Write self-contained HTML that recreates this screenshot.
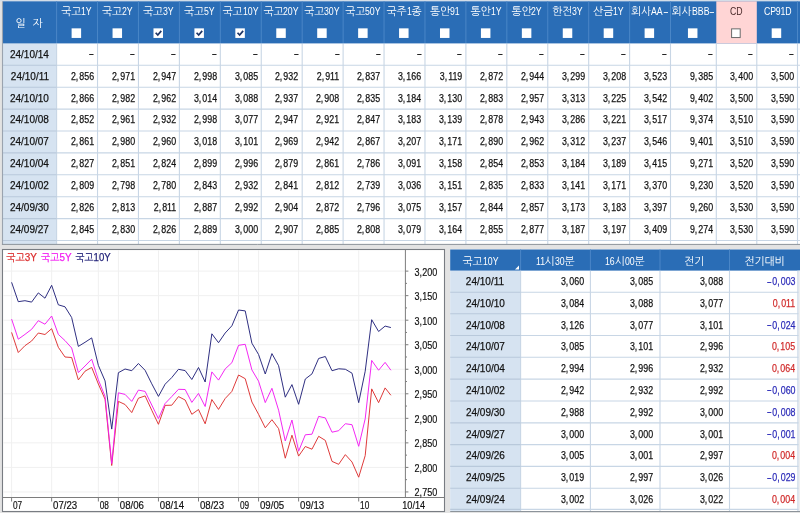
<!DOCTYPE html><html lang="ko"><head><meta charset="utf-8"><title>금리 시세</title><style>

html,body{margin:0;padding:0}
body{width:800px;height:513px;overflow:hidden;background:#e3e3e3;font-family:"Liberation Sans","NanumGothic","Noto Sans CJK KR",sans-serif;font-size:10px;color:#111;position:relative}
div,span{box-sizing:border-box}
.abs{position:absolute}
svg{display:block}
#top,#t2{position:absolute;left:0;top:0;width:800px;height:513px;overflow:hidden;will-change:transform}
#top{height:246px}
.hd{position:absolute;color:#fff;text-align:center;white-space:nowrap}
.hd.cd{color:#4a2a2a}
.hd .t{position:absolute;left:-1px;right:0;top:4px;height:12px;line-height:12px}
.k{font-size:10.8px;letter-spacing:-0.1px}
.l{display:inline-block;font-size:11.5px;transform:scaleX(.76);transform-origin:0 50%;letter-spacing:0}
.hy{display:inline-block;font-size:11.5px;transform:scaleX(1.5);transform-origin:0 50%;margin-right:1.5px;position:relative;top:-0.5px}
.dc{position:absolute;text-align:center;white-space:nowrap}
.c{position:absolute;text-align:right;white-space:nowrap}
.n,.d,.m{-webkit-text-stroke:0.25px currentColor}
.cm{margin-right:1.3px}
.n{display:inline-block;font-size:11.5px;transform:scaleX(.77);transform-origin:100% 50%}
.m{display:inline-block;font-size:11.5px;transform:scaleX(1.35);transform-origin:100% 50%;position:relative;top:-0.5px}
.d{display:inline-block;font-size:11.5px;transform:scaleX(.87);transform-origin:50% 50%}
.neg{color:#2b2bb8}.pos{color:#d02a2a}
.mi{display:inline-block;transform:scaleX(1.7);transform-origin:100% 50%;margin-left:3px;margin-right:0.6px;position:relative;top:-0.5px}

</style></head><body>
<div id="top">
<svg class="abs" style="left:0;top:0" width="800" height="246" viewBox="0 0 800 246">
<rect x="0" y="0" width="800" height="1.3" fill="#d3dde8"/>
<rect x="2.8" y="1.3" width="800" height="243.1" fill="#fff"/>
<rect x="2.8" y="43.4" width="53.8" height="201" fill="#d6e3f1"/>
<rect x="2.8" y="1.3" width="800" height="42.1" fill="#2a6db6"/>
<rect x="716.3" y="1.3" width="40.5" height="42.1" fill="#ffd5d5"/>
<path d="M56.6 1.3V43.4M97.53 1.3V43.4M138.46 1.3V43.4M179.39 1.3V43.4M220.32 1.3V43.4M261.25 1.3V43.4M302.18 1.3V43.4M343.11 1.3V43.4M384.04 1.3V43.4M424.97 1.3V43.4M465.9 1.3V43.4M506.83 1.3V43.4M547.76 1.3V43.4M588.69 1.3V43.4M629.62 1.3V43.4M670.5 1.3V43.4M797.5 1.3V43.4" stroke="#4a86c7" stroke-width="1" fill="none"/>
<path d="M56.6 43.4V244.4M97.53 43.4V244.4M138.46 43.4V244.4M179.39 43.4V244.4M220.32 43.4V244.4M261.25 43.4V244.4M302.18 43.4V244.4M343.11 43.4V244.4M384.04 43.4V244.4M424.97 43.4V244.4M465.9 43.4V244.4M506.83 43.4V244.4M547.76 43.4V244.4M588.69 43.4V244.4M629.62 43.4V244.4M670.5 43.4V244.4M716.3 43.4V244.4M756.8 43.4V244.4M797.5 43.4V244.4M56.6 65.3H800M56.6 87.2H800M56.6 109.1H800M56.6 131H800M56.6 152.9H800M56.6 174.8H800M56.6 196.7H800M56.6 218.6H800M56.6 240.5H800" stroke="#c8d6e5" stroke-width="1.1" fill="none"/>
<path d="M2.8 65.3H56.6M2.8 87.2H56.6M2.8 109.1H56.6M2.8 131H56.6M2.8 152.9H56.6M2.8 174.8H56.6M2.8 196.7H56.6M2.8 218.6H56.6M2.8 240.5H56.6" stroke="#b9c9db" stroke-width="1.1" fill="none"/>
<rect x="71.61" y="28.35" width="9.5" height="9.6" fill="#fff"/>
<rect x="112.55" y="28.35" width="9.5" height="9.6" fill="#fff"/>
<rect x="153.48" y="28.35" width="9.5" height="9.6" fill="#fff"/>
<path d="M155.68 32.75l2.1 2.3l3.5 -4.2" fill="none" stroke="#1e3566" stroke-width="1.7"/>
<rect x="194.41" y="28.35" width="9.5" height="9.6" fill="#fff"/>
<path d="M196.6 32.75l2.1 2.3l3.5 -4.2" fill="none" stroke="#1e3566" stroke-width="1.7"/>
<rect x="235.34" y="28.35" width="9.5" height="9.6" fill="#fff"/>
<path d="M237.53 32.75l2.1 2.3l3.5 -4.2" fill="none" stroke="#1e3566" stroke-width="1.7"/>
<rect x="276.27" y="28.35" width="9.5" height="9.6" fill="#fff"/>
<rect x="317.19" y="28.35" width="9.5" height="9.6" fill="#fff"/>
<rect x="358.13" y="28.35" width="9.5" height="9.6" fill="#fff"/>
<rect x="399.06" y="28.35" width="9.5" height="9.6" fill="#fff"/>
<rect x="439.99" y="28.35" width="9.5" height="9.6" fill="#fff"/>
<rect x="480.92" y="28.35" width="9.5" height="9.6" fill="#fff"/>
<rect x="521.85" y="28.35" width="9.5" height="9.6" fill="#fff"/>
<rect x="562.77" y="28.35" width="9.5" height="9.6" fill="#fff"/>
<rect x="603.7" y="28.35" width="9.5" height="9.6" fill="#fff"/>
<rect x="644.61" y="28.35" width="9.5" height="9.6" fill="#fff"/>
<rect x="687.95" y="28.35" width="9.5" height="9.6" fill="#fff"/>
<rect x="731.6" y="28.85" width="8.6" height="8.7" fill="#fff" stroke="#6b6b6b" stroke-width="1"/>
<rect x="771.7" y="28.35" width="9.5" height="9.6" fill="#fff"/>
<path d="M2.5 1.3V244.4" stroke="#9aa3af" stroke-width="1.1" fill="none"/>
<path d="M1.9 244.4H800" stroke="#8c939a" stroke-width="1" fill="none"/>
</svg>
<div class="hd" style="left:2.8px;top:1.3px;width:53.8px;height:42.1px"><div class="t" style="top:15.5px"><span class="k" style="letter-spacing:7px;margin-left:7px">일자</span></div></div>
<div class="hd" style="left:56.6px;top:1.3px;width:40.93px;height:42.1px"><div class="t"><span class="k">국고</span><span class="l" style="margin-right:-3.38px">1Y</span></div></div>
<div class="hd" style="left:97.53px;top:1.3px;width:40.93px;height:42.1px"><div class="t"><span class="k">국고</span><span class="l" style="margin-right:-3.38px">2Y</span></div></div>
<div class="hd" style="left:138.46px;top:1.3px;width:40.93px;height:42.1px"><div class="t"><span class="k">국고</span><span class="l" style="margin-right:-3.38px">3Y</span></div></div>
<div class="hd" style="left:179.39px;top:1.3px;width:40.93px;height:42.1px"><div class="t"><span class="k">국고</span><span class="l" style="margin-right:-3.38px">5Y</span></div></div>
<div class="hd" style="left:220.32px;top:1.3px;width:40.93px;height:42.1px"><div class="t"><span class="k">국고</span><span class="l" style="margin-right:-4.91px">10Y</span></div></div>
<div class="hd" style="left:261.25px;top:1.3px;width:40.93px;height:42.1px"><div class="t"><span class="k">국고</span><span class="l" style="margin-right:-4.91px">20Y</span></div></div>
<div class="hd" style="left:302.18px;top:1.3px;width:40.93px;height:42.1px"><div class="t"><span class="k">국고</span><span class="l" style="margin-right:-4.91px">30Y</span></div></div>
<div class="hd" style="left:343.11px;top:1.3px;width:40.93px;height:42.1px"><div class="t"><span class="k">국고</span><span class="l" style="margin-right:-4.91px">50Y</span></div></div>
<div class="hd" style="left:384.04px;top:1.3px;width:40.93px;height:42.1px"><div class="t"><span class="k">국주</span><span class="l" style="margin-right:-1.53px">1</span><span class="k">종</span></div></div>
<div class="hd" style="left:424.97px;top:1.3px;width:40.93px;height:42.1px"><div class="t"><span class="k">통안</span><span class="l" style="margin-right:-3.07px">91</span></div></div>
<div class="hd" style="left:465.9px;top:1.3px;width:40.93px;height:42.1px"><div class="t"><span class="k">통안</span><span class="l" style="margin-right:-3.38px">1Y</span></div></div>
<div class="hd" style="left:506.83px;top:1.3px;width:40.93px;height:42.1px"><div class="t"><span class="k">통안</span><span class="l" style="margin-right:-3.38px">2Y</span></div></div>
<div class="hd" style="left:547.76px;top:1.3px;width:40.93px;height:42.1px"><div class="t"><span class="k">한전</span><span class="l" style="margin-right:-3.38px">3Y</span></div></div>
<div class="hd" style="left:588.69px;top:1.3px;width:40.93px;height:42.1px"><div class="t"><span class="k">산금</span><span class="l" style="margin-right:-3.38px">1Y</span></div></div>
<div class="hd" style="left:629.62px;top:1.3px;width:40.88px;height:42.1px"><div class="t"><span class="k">회사</span><span class="l" style="margin-right:-3.68px">AA</span><span class="hy">-</span></div></div>
<div class="hd" style="left:670.5px;top:1.3px;width:45.8px;height:42.1px"><div class="t"><span class="k">회사</span><span class="l" style="margin-right:-5.52px">BBB</span><span class="hy">-</span></div></div>
<div class="hd cd" style="left:716.3px;top:1.3px;width:40.5px;height:42.1px"><div class="t"><span class="l" style="margin-right:-3.99px">CD</span></div></div>
<div class="hd" style="left:756.8px;top:1.3px;width:40.7px;height:42.1px"><div class="t"><span class="l" style="margin-right:-8.9px;letter-spacing:-0.2px;margin-left:1px">CP91D</span></div></div>
<div class="dc" style="left:2.8px;width:53.8px;top:43.7px;height:21.9px;line-height:21.9px"><span class="d">24/10/14</span></div>
<div class="c" style="left:56.6px;width:40.93px;padding-right:3.6px;top:43.7px;height:21.9px;line-height:21.9px"><span class="m">-</span></div>
<div class="c" style="left:97.53px;width:40.93px;padding-right:3.6px;top:43.7px;height:21.9px;line-height:21.9px"><span class="m">-</span></div>
<div class="c" style="left:138.46px;width:40.93px;padding-right:3.6px;top:43.7px;height:21.9px;line-height:21.9px"><span class="m">-</span></div>
<div class="c" style="left:179.39px;width:40.93px;padding-right:3.6px;top:43.7px;height:21.9px;line-height:21.9px"><span class="m">-</span></div>
<div class="c" style="left:220.32px;width:40.93px;padding-right:3.6px;top:43.7px;height:21.9px;line-height:21.9px"><span class="m">-</span></div>
<div class="c" style="left:261.25px;width:40.93px;padding-right:3.6px;top:43.7px;height:21.9px;line-height:21.9px"><span class="m">-</span></div>
<div class="c" style="left:302.18px;width:40.93px;padding-right:3.6px;top:43.7px;height:21.9px;line-height:21.9px"><span class="m">-</span></div>
<div class="c" style="left:343.11px;width:40.93px;padding-right:3.6px;top:43.7px;height:21.9px;line-height:21.9px"><span class="m">-</span></div>
<div class="c" style="left:384.04px;width:40.93px;padding-right:3.6px;top:43.7px;height:21.9px;line-height:21.9px"><span class="m">-</span></div>
<div class="c" style="left:424.97px;width:40.93px;padding-right:3.6px;top:43.7px;height:21.9px;line-height:21.9px"><span class="m">-</span></div>
<div class="c" style="left:465.9px;width:40.93px;padding-right:3.6px;top:43.7px;height:21.9px;line-height:21.9px"><span class="m">-</span></div>
<div class="c" style="left:506.83px;width:40.93px;padding-right:3.6px;top:43.7px;height:21.9px;line-height:21.9px"><span class="m">-</span></div>
<div class="c" style="left:547.76px;width:40.93px;padding-right:3.6px;top:43.7px;height:21.9px;line-height:21.9px"><span class="m">-</span></div>
<div class="c" style="left:588.69px;width:40.93px;padding-right:3.6px;top:43.7px;height:21.9px;line-height:21.9px"><span class="m">-</span></div>
<div class="c" style="left:629.62px;width:40.88px;padding-right:3.6px;top:43.7px;height:21.9px;line-height:21.9px"><span class="m">-</span></div>
<div class="c" style="left:670.5px;width:45.8px;padding-right:3.6px;top:43.7px;height:21.9px;line-height:21.9px"><span class="m">-</span></div>
<div class="c" style="left:716.3px;width:40.5px;padding-right:3.6px;top:43.7px;height:21.9px;line-height:21.9px"><span class="m">-</span></div>
<div class="c" style="left:756.8px;width:40.7px;padding-right:3.6px;top:43.7px;height:21.9px;line-height:21.9px"><span class="m">-</span></div>
<div class="dc" style="left:2.8px;width:53.8px;top:65.6px;height:21.9px;line-height:21.9px"><span class="d">24/10/11</span></div>
<div class="c" style="left:56.6px;width:40.93px;padding-right:3.6px;top:65.6px;height:21.9px;line-height:21.9px"><span class="n">2<span class="cm">,</span>856</span></div>
<div class="c" style="left:97.53px;width:40.93px;padding-right:3.6px;top:65.6px;height:21.9px;line-height:21.9px"><span class="n">2<span class="cm">,</span>971</span></div>
<div class="c" style="left:138.46px;width:40.93px;padding-right:3.6px;top:65.6px;height:21.9px;line-height:21.9px"><span class="n">2<span class="cm">,</span>947</span></div>
<div class="c" style="left:179.39px;width:40.93px;padding-right:3.6px;top:65.6px;height:21.9px;line-height:21.9px"><span class="n">2<span class="cm">,</span>998</span></div>
<div class="c" style="left:220.32px;width:40.93px;padding-right:3.6px;top:65.6px;height:21.9px;line-height:21.9px"><span class="n">3<span class="cm">,</span>085</span></div>
<div class="c" style="left:261.25px;width:40.93px;padding-right:3.6px;top:65.6px;height:21.9px;line-height:21.9px"><span class="n">2<span class="cm">,</span>932</span></div>
<div class="c" style="left:302.18px;width:40.93px;padding-right:3.6px;top:65.6px;height:21.9px;line-height:21.9px"><span class="n">2<span class="cm">,</span>911</span></div>
<div class="c" style="left:343.11px;width:40.93px;padding-right:3.6px;top:65.6px;height:21.9px;line-height:21.9px"><span class="n">2<span class="cm">,</span>837</span></div>
<div class="c" style="left:384.04px;width:40.93px;padding-right:3.6px;top:65.6px;height:21.9px;line-height:21.9px"><span class="n">3<span class="cm">,</span>166</span></div>
<div class="c" style="left:424.97px;width:40.93px;padding-right:3.6px;top:65.6px;height:21.9px;line-height:21.9px"><span class="n">3<span class="cm">,</span>119</span></div>
<div class="c" style="left:465.9px;width:40.93px;padding-right:3.6px;top:65.6px;height:21.9px;line-height:21.9px"><span class="n">2<span class="cm">,</span>872</span></div>
<div class="c" style="left:506.83px;width:40.93px;padding-right:3.6px;top:65.6px;height:21.9px;line-height:21.9px"><span class="n">2<span class="cm">,</span>944</span></div>
<div class="c" style="left:547.76px;width:40.93px;padding-right:3.6px;top:65.6px;height:21.9px;line-height:21.9px"><span class="n">3<span class="cm">,</span>299</span></div>
<div class="c" style="left:588.69px;width:40.93px;padding-right:3.6px;top:65.6px;height:21.9px;line-height:21.9px"><span class="n">3<span class="cm">,</span>208</span></div>
<div class="c" style="left:629.62px;width:40.88px;padding-right:3.6px;top:65.6px;height:21.9px;line-height:21.9px"><span class="n">3<span class="cm">,</span>523</span></div>
<div class="c" style="left:670.5px;width:45.8px;padding-right:3.6px;top:65.6px;height:21.9px;line-height:21.9px"><span class="n">9<span class="cm">,</span>385</span></div>
<div class="c" style="left:716.3px;width:40.5px;padding-right:3.6px;top:65.6px;height:21.9px;line-height:21.9px"><span class="n">3<span class="cm">,</span>400</span></div>
<div class="c" style="left:756.8px;width:40.7px;padding-right:3.6px;top:65.6px;height:21.9px;line-height:21.9px"><span class="n">3<span class="cm">,</span>500</span></div>
<div class="dc" style="left:2.8px;width:53.8px;top:87.5px;height:21.9px;line-height:21.9px"><span class="d">24/10/10</span></div>
<div class="c" style="left:56.6px;width:40.93px;padding-right:3.6px;top:87.5px;height:21.9px;line-height:21.9px"><span class="n">2<span class="cm">,</span>866</span></div>
<div class="c" style="left:97.53px;width:40.93px;padding-right:3.6px;top:87.5px;height:21.9px;line-height:21.9px"><span class="n">2<span class="cm">,</span>982</span></div>
<div class="c" style="left:138.46px;width:40.93px;padding-right:3.6px;top:87.5px;height:21.9px;line-height:21.9px"><span class="n">2<span class="cm">,</span>962</span></div>
<div class="c" style="left:179.39px;width:40.93px;padding-right:3.6px;top:87.5px;height:21.9px;line-height:21.9px"><span class="n">3<span class="cm">,</span>014</span></div>
<div class="c" style="left:220.32px;width:40.93px;padding-right:3.6px;top:87.5px;height:21.9px;line-height:21.9px"><span class="n">3<span class="cm">,</span>088</span></div>
<div class="c" style="left:261.25px;width:40.93px;padding-right:3.6px;top:87.5px;height:21.9px;line-height:21.9px"><span class="n">2<span class="cm">,</span>937</span></div>
<div class="c" style="left:302.18px;width:40.93px;padding-right:3.6px;top:87.5px;height:21.9px;line-height:21.9px"><span class="n">2<span class="cm">,</span>908</span></div>
<div class="c" style="left:343.11px;width:40.93px;padding-right:3.6px;top:87.5px;height:21.9px;line-height:21.9px"><span class="n">2<span class="cm">,</span>835</span></div>
<div class="c" style="left:384.04px;width:40.93px;padding-right:3.6px;top:87.5px;height:21.9px;line-height:21.9px"><span class="n">3<span class="cm">,</span>184</span></div>
<div class="c" style="left:424.97px;width:40.93px;padding-right:3.6px;top:87.5px;height:21.9px;line-height:21.9px"><span class="n">3<span class="cm">,</span>130</span></div>
<div class="c" style="left:465.9px;width:40.93px;padding-right:3.6px;top:87.5px;height:21.9px;line-height:21.9px"><span class="n">2<span class="cm">,</span>883</span></div>
<div class="c" style="left:506.83px;width:40.93px;padding-right:3.6px;top:87.5px;height:21.9px;line-height:21.9px"><span class="n">2<span class="cm">,</span>957</span></div>
<div class="c" style="left:547.76px;width:40.93px;padding-right:3.6px;top:87.5px;height:21.9px;line-height:21.9px"><span class="n">3<span class="cm">,</span>313</span></div>
<div class="c" style="left:588.69px;width:40.93px;padding-right:3.6px;top:87.5px;height:21.9px;line-height:21.9px"><span class="n">3<span class="cm">,</span>225</span></div>
<div class="c" style="left:629.62px;width:40.88px;padding-right:3.6px;top:87.5px;height:21.9px;line-height:21.9px"><span class="n">3<span class="cm">,</span>542</span></div>
<div class="c" style="left:670.5px;width:45.8px;padding-right:3.6px;top:87.5px;height:21.9px;line-height:21.9px"><span class="n">9<span class="cm">,</span>402</span></div>
<div class="c" style="left:716.3px;width:40.5px;padding-right:3.6px;top:87.5px;height:21.9px;line-height:21.9px"><span class="n">3<span class="cm">,</span>500</span></div>
<div class="c" style="left:756.8px;width:40.7px;padding-right:3.6px;top:87.5px;height:21.9px;line-height:21.9px"><span class="n">3<span class="cm">,</span>590</span></div>
<div class="dc" style="left:2.8px;width:53.8px;top:109.4px;height:21.9px;line-height:21.9px"><span class="d">24/10/08</span></div>
<div class="c" style="left:56.6px;width:40.93px;padding-right:3.6px;top:109.4px;height:21.9px;line-height:21.9px"><span class="n">2<span class="cm">,</span>852</span></div>
<div class="c" style="left:97.53px;width:40.93px;padding-right:3.6px;top:109.4px;height:21.9px;line-height:21.9px"><span class="n">2<span class="cm">,</span>961</span></div>
<div class="c" style="left:138.46px;width:40.93px;padding-right:3.6px;top:109.4px;height:21.9px;line-height:21.9px"><span class="n">2<span class="cm">,</span>932</span></div>
<div class="c" style="left:179.39px;width:40.93px;padding-right:3.6px;top:109.4px;height:21.9px;line-height:21.9px"><span class="n">2<span class="cm">,</span>998</span></div>
<div class="c" style="left:220.32px;width:40.93px;padding-right:3.6px;top:109.4px;height:21.9px;line-height:21.9px"><span class="n">3<span class="cm">,</span>077</span></div>
<div class="c" style="left:261.25px;width:40.93px;padding-right:3.6px;top:109.4px;height:21.9px;line-height:21.9px"><span class="n">2<span class="cm">,</span>947</span></div>
<div class="c" style="left:302.18px;width:40.93px;padding-right:3.6px;top:109.4px;height:21.9px;line-height:21.9px"><span class="n">2<span class="cm">,</span>921</span></div>
<div class="c" style="left:343.11px;width:40.93px;padding-right:3.6px;top:109.4px;height:21.9px;line-height:21.9px"><span class="n">2<span class="cm">,</span>847</span></div>
<div class="c" style="left:384.04px;width:40.93px;padding-right:3.6px;top:109.4px;height:21.9px;line-height:21.9px"><span class="n">3<span class="cm">,</span>183</span></div>
<div class="c" style="left:424.97px;width:40.93px;padding-right:3.6px;top:109.4px;height:21.9px;line-height:21.9px"><span class="n">3<span class="cm">,</span>139</span></div>
<div class="c" style="left:465.9px;width:40.93px;padding-right:3.6px;top:109.4px;height:21.9px;line-height:21.9px"><span class="n">2<span class="cm">,</span>878</span></div>
<div class="c" style="left:506.83px;width:40.93px;padding-right:3.6px;top:109.4px;height:21.9px;line-height:21.9px"><span class="n">2<span class="cm">,</span>943</span></div>
<div class="c" style="left:547.76px;width:40.93px;padding-right:3.6px;top:109.4px;height:21.9px;line-height:21.9px"><span class="n">3<span class="cm">,</span>286</span></div>
<div class="c" style="left:588.69px;width:40.93px;padding-right:3.6px;top:109.4px;height:21.9px;line-height:21.9px"><span class="n">3<span class="cm">,</span>221</span></div>
<div class="c" style="left:629.62px;width:40.88px;padding-right:3.6px;top:109.4px;height:21.9px;line-height:21.9px"><span class="n">3<span class="cm">,</span>517</span></div>
<div class="c" style="left:670.5px;width:45.8px;padding-right:3.6px;top:109.4px;height:21.9px;line-height:21.9px"><span class="n">9<span class="cm">,</span>374</span></div>
<div class="c" style="left:716.3px;width:40.5px;padding-right:3.6px;top:109.4px;height:21.9px;line-height:21.9px"><span class="n">3<span class="cm">,</span>510</span></div>
<div class="c" style="left:756.8px;width:40.7px;padding-right:3.6px;top:109.4px;height:21.9px;line-height:21.9px"><span class="n">3<span class="cm">,</span>590</span></div>
<div class="dc" style="left:2.8px;width:53.8px;top:131.3px;height:21.9px;line-height:21.9px"><span class="d">24/10/07</span></div>
<div class="c" style="left:56.6px;width:40.93px;padding-right:3.6px;top:131.3px;height:21.9px;line-height:21.9px"><span class="n">2<span class="cm">,</span>861</span></div>
<div class="c" style="left:97.53px;width:40.93px;padding-right:3.6px;top:131.3px;height:21.9px;line-height:21.9px"><span class="n">2<span class="cm">,</span>980</span></div>
<div class="c" style="left:138.46px;width:40.93px;padding-right:3.6px;top:131.3px;height:21.9px;line-height:21.9px"><span class="n">2<span class="cm">,</span>960</span></div>
<div class="c" style="left:179.39px;width:40.93px;padding-right:3.6px;top:131.3px;height:21.9px;line-height:21.9px"><span class="n">3<span class="cm">,</span>018</span></div>
<div class="c" style="left:220.32px;width:40.93px;padding-right:3.6px;top:131.3px;height:21.9px;line-height:21.9px"><span class="n">3<span class="cm">,</span>101</span></div>
<div class="c" style="left:261.25px;width:40.93px;padding-right:3.6px;top:131.3px;height:21.9px;line-height:21.9px"><span class="n">2<span class="cm">,</span>969</span></div>
<div class="c" style="left:302.18px;width:40.93px;padding-right:3.6px;top:131.3px;height:21.9px;line-height:21.9px"><span class="n">2<span class="cm">,</span>942</span></div>
<div class="c" style="left:343.11px;width:40.93px;padding-right:3.6px;top:131.3px;height:21.9px;line-height:21.9px"><span class="n">2<span class="cm">,</span>867</span></div>
<div class="c" style="left:384.04px;width:40.93px;padding-right:3.6px;top:131.3px;height:21.9px;line-height:21.9px"><span class="n">3<span class="cm">,</span>207</span></div>
<div class="c" style="left:424.97px;width:40.93px;padding-right:3.6px;top:131.3px;height:21.9px;line-height:21.9px"><span class="n">3<span class="cm">,</span>171</span></div>
<div class="c" style="left:465.9px;width:40.93px;padding-right:3.6px;top:131.3px;height:21.9px;line-height:21.9px"><span class="n">2<span class="cm">,</span>890</span></div>
<div class="c" style="left:506.83px;width:40.93px;padding-right:3.6px;top:131.3px;height:21.9px;line-height:21.9px"><span class="n">2<span class="cm">,</span>962</span></div>
<div class="c" style="left:547.76px;width:40.93px;padding-right:3.6px;top:131.3px;height:21.9px;line-height:21.9px"><span class="n">3<span class="cm">,</span>312</span></div>
<div class="c" style="left:588.69px;width:40.93px;padding-right:3.6px;top:131.3px;height:21.9px;line-height:21.9px"><span class="n">3<span class="cm">,</span>237</span></div>
<div class="c" style="left:629.62px;width:40.88px;padding-right:3.6px;top:131.3px;height:21.9px;line-height:21.9px"><span class="n">3<span class="cm">,</span>546</span></div>
<div class="c" style="left:670.5px;width:45.8px;padding-right:3.6px;top:131.3px;height:21.9px;line-height:21.9px"><span class="n">9<span class="cm">,</span>401</span></div>
<div class="c" style="left:716.3px;width:40.5px;padding-right:3.6px;top:131.3px;height:21.9px;line-height:21.9px"><span class="n">3<span class="cm">,</span>510</span></div>
<div class="c" style="left:756.8px;width:40.7px;padding-right:3.6px;top:131.3px;height:21.9px;line-height:21.9px"><span class="n">3<span class="cm">,</span>590</span></div>
<div class="dc" style="left:2.8px;width:53.8px;top:153.2px;height:21.9px;line-height:21.9px"><span class="d">24/10/04</span></div>
<div class="c" style="left:56.6px;width:40.93px;padding-right:3.6px;top:153.2px;height:21.9px;line-height:21.9px"><span class="n">2<span class="cm">,</span>827</span></div>
<div class="c" style="left:97.53px;width:40.93px;padding-right:3.6px;top:153.2px;height:21.9px;line-height:21.9px"><span class="n">2<span class="cm">,</span>851</span></div>
<div class="c" style="left:138.46px;width:40.93px;padding-right:3.6px;top:153.2px;height:21.9px;line-height:21.9px"><span class="n">2<span class="cm">,</span>824</span></div>
<div class="c" style="left:179.39px;width:40.93px;padding-right:3.6px;top:153.2px;height:21.9px;line-height:21.9px"><span class="n">2<span class="cm">,</span>899</span></div>
<div class="c" style="left:220.32px;width:40.93px;padding-right:3.6px;top:153.2px;height:21.9px;line-height:21.9px"><span class="n">2<span class="cm">,</span>996</span></div>
<div class="c" style="left:261.25px;width:40.93px;padding-right:3.6px;top:153.2px;height:21.9px;line-height:21.9px"><span class="n">2<span class="cm">,</span>879</span></div>
<div class="c" style="left:302.18px;width:40.93px;padding-right:3.6px;top:153.2px;height:21.9px;line-height:21.9px"><span class="n">2<span class="cm">,</span>861</span></div>
<div class="c" style="left:343.11px;width:40.93px;padding-right:3.6px;top:153.2px;height:21.9px;line-height:21.9px"><span class="n">2<span class="cm">,</span>786</span></div>
<div class="c" style="left:384.04px;width:40.93px;padding-right:3.6px;top:153.2px;height:21.9px;line-height:21.9px"><span class="n">3<span class="cm">,</span>091</span></div>
<div class="c" style="left:424.97px;width:40.93px;padding-right:3.6px;top:153.2px;height:21.9px;line-height:21.9px"><span class="n">3<span class="cm">,</span>158</span></div>
<div class="c" style="left:465.9px;width:40.93px;padding-right:3.6px;top:153.2px;height:21.9px;line-height:21.9px"><span class="n">2<span class="cm">,</span>854</span></div>
<div class="c" style="left:506.83px;width:40.93px;padding-right:3.6px;top:153.2px;height:21.9px;line-height:21.9px"><span class="n">2<span class="cm">,</span>853</span></div>
<div class="c" style="left:547.76px;width:40.93px;padding-right:3.6px;top:153.2px;height:21.9px;line-height:21.9px"><span class="n">3<span class="cm">,</span>184</span></div>
<div class="c" style="left:588.69px;width:40.93px;padding-right:3.6px;top:153.2px;height:21.9px;line-height:21.9px"><span class="n">3<span class="cm">,</span>189</span></div>
<div class="c" style="left:629.62px;width:40.88px;padding-right:3.6px;top:153.2px;height:21.9px;line-height:21.9px"><span class="n">3<span class="cm">,</span>415</span></div>
<div class="c" style="left:670.5px;width:45.8px;padding-right:3.6px;top:153.2px;height:21.9px;line-height:21.9px"><span class="n">9<span class="cm">,</span>271</span></div>
<div class="c" style="left:716.3px;width:40.5px;padding-right:3.6px;top:153.2px;height:21.9px;line-height:21.9px"><span class="n">3<span class="cm">,</span>520</span></div>
<div class="c" style="left:756.8px;width:40.7px;padding-right:3.6px;top:153.2px;height:21.9px;line-height:21.9px"><span class="n">3<span class="cm">,</span>590</span></div>
<div class="dc" style="left:2.8px;width:53.8px;top:175.1px;height:21.9px;line-height:21.9px"><span class="d">24/10/02</span></div>
<div class="c" style="left:56.6px;width:40.93px;padding-right:3.6px;top:175.1px;height:21.9px;line-height:21.9px"><span class="n">2<span class="cm">,</span>809</span></div>
<div class="c" style="left:97.53px;width:40.93px;padding-right:3.6px;top:175.1px;height:21.9px;line-height:21.9px"><span class="n">2<span class="cm">,</span>798</span></div>
<div class="c" style="left:138.46px;width:40.93px;padding-right:3.6px;top:175.1px;height:21.9px;line-height:21.9px"><span class="n">2<span class="cm">,</span>780</span></div>
<div class="c" style="left:179.39px;width:40.93px;padding-right:3.6px;top:175.1px;height:21.9px;line-height:21.9px"><span class="n">2<span class="cm">,</span>843</span></div>
<div class="c" style="left:220.32px;width:40.93px;padding-right:3.6px;top:175.1px;height:21.9px;line-height:21.9px"><span class="n">2<span class="cm">,</span>932</span></div>
<div class="c" style="left:261.25px;width:40.93px;padding-right:3.6px;top:175.1px;height:21.9px;line-height:21.9px"><span class="n">2<span class="cm">,</span>841</span></div>
<div class="c" style="left:302.18px;width:40.93px;padding-right:3.6px;top:175.1px;height:21.9px;line-height:21.9px"><span class="n">2<span class="cm">,</span>812</span></div>
<div class="c" style="left:343.11px;width:40.93px;padding-right:3.6px;top:175.1px;height:21.9px;line-height:21.9px"><span class="n">2<span class="cm">,</span>739</span></div>
<div class="c" style="left:384.04px;width:40.93px;padding-right:3.6px;top:175.1px;height:21.9px;line-height:21.9px"><span class="n">3<span class="cm">,</span>036</span></div>
<div class="c" style="left:424.97px;width:40.93px;padding-right:3.6px;top:175.1px;height:21.9px;line-height:21.9px"><span class="n">3<span class="cm">,</span>151</span></div>
<div class="c" style="left:465.9px;width:40.93px;padding-right:3.6px;top:175.1px;height:21.9px;line-height:21.9px"><span class="n">2<span class="cm">,</span>835</span></div>
<div class="c" style="left:506.83px;width:40.93px;padding-right:3.6px;top:175.1px;height:21.9px;line-height:21.9px"><span class="n">2<span class="cm">,</span>833</span></div>
<div class="c" style="left:547.76px;width:40.93px;padding-right:3.6px;top:175.1px;height:21.9px;line-height:21.9px"><span class="n">3<span class="cm">,</span>141</span></div>
<div class="c" style="left:588.69px;width:40.93px;padding-right:3.6px;top:175.1px;height:21.9px;line-height:21.9px"><span class="n">3<span class="cm">,</span>171</span></div>
<div class="c" style="left:629.62px;width:40.88px;padding-right:3.6px;top:175.1px;height:21.9px;line-height:21.9px"><span class="n">3<span class="cm">,</span>370</span></div>
<div class="c" style="left:670.5px;width:45.8px;padding-right:3.6px;top:175.1px;height:21.9px;line-height:21.9px"><span class="n">9<span class="cm">,</span>230</span></div>
<div class="c" style="left:716.3px;width:40.5px;padding-right:3.6px;top:175.1px;height:21.9px;line-height:21.9px"><span class="n">3<span class="cm">,</span>520</span></div>
<div class="c" style="left:756.8px;width:40.7px;padding-right:3.6px;top:175.1px;height:21.9px;line-height:21.9px"><span class="n">3<span class="cm">,</span>590</span></div>
<div class="dc" style="left:2.8px;width:53.8px;top:197px;height:21.9px;line-height:21.9px"><span class="d">24/09/30</span></div>
<div class="c" style="left:56.6px;width:40.93px;padding-right:3.6px;top:197px;height:21.9px;line-height:21.9px"><span class="n">2<span class="cm">,</span>826</span></div>
<div class="c" style="left:97.53px;width:40.93px;padding-right:3.6px;top:197px;height:21.9px;line-height:21.9px"><span class="n">2<span class="cm">,</span>813</span></div>
<div class="c" style="left:138.46px;width:40.93px;padding-right:3.6px;top:197px;height:21.9px;line-height:21.9px"><span class="n">2<span class="cm">,</span>811</span></div>
<div class="c" style="left:179.39px;width:40.93px;padding-right:3.6px;top:197px;height:21.9px;line-height:21.9px"><span class="n">2<span class="cm">,</span>887</span></div>
<div class="c" style="left:220.32px;width:40.93px;padding-right:3.6px;top:197px;height:21.9px;line-height:21.9px"><span class="n">2<span class="cm">,</span>992</span></div>
<div class="c" style="left:261.25px;width:40.93px;padding-right:3.6px;top:197px;height:21.9px;line-height:21.9px"><span class="n">2<span class="cm">,</span>904</span></div>
<div class="c" style="left:302.18px;width:40.93px;padding-right:3.6px;top:197px;height:21.9px;line-height:21.9px"><span class="n">2<span class="cm">,</span>872</span></div>
<div class="c" style="left:343.11px;width:40.93px;padding-right:3.6px;top:197px;height:21.9px;line-height:21.9px"><span class="n">2<span class="cm">,</span>796</span></div>
<div class="c" style="left:384.04px;width:40.93px;padding-right:3.6px;top:197px;height:21.9px;line-height:21.9px"><span class="n">3<span class="cm">,</span>075</span></div>
<div class="c" style="left:424.97px;width:40.93px;padding-right:3.6px;top:197px;height:21.9px;line-height:21.9px"><span class="n">3<span class="cm">,</span>157</span></div>
<div class="c" style="left:465.9px;width:40.93px;padding-right:3.6px;top:197px;height:21.9px;line-height:21.9px"><span class="n">2<span class="cm">,</span>844</span></div>
<div class="c" style="left:506.83px;width:40.93px;padding-right:3.6px;top:197px;height:21.9px;line-height:21.9px"><span class="n">2<span class="cm">,</span>857</span></div>
<div class="c" style="left:547.76px;width:40.93px;padding-right:3.6px;top:197px;height:21.9px;line-height:21.9px"><span class="n">3<span class="cm">,</span>173</span></div>
<div class="c" style="left:588.69px;width:40.93px;padding-right:3.6px;top:197px;height:21.9px;line-height:21.9px"><span class="n">3<span class="cm">,</span>183</span></div>
<div class="c" style="left:629.62px;width:40.88px;padding-right:3.6px;top:197px;height:21.9px;line-height:21.9px"><span class="n">3<span class="cm">,</span>397</span></div>
<div class="c" style="left:670.5px;width:45.8px;padding-right:3.6px;top:197px;height:21.9px;line-height:21.9px"><span class="n">9<span class="cm">,</span>260</span></div>
<div class="c" style="left:716.3px;width:40.5px;padding-right:3.6px;top:197px;height:21.9px;line-height:21.9px"><span class="n">3<span class="cm">,</span>530</span></div>
<div class="c" style="left:756.8px;width:40.7px;padding-right:3.6px;top:197px;height:21.9px;line-height:21.9px"><span class="n">3<span class="cm">,</span>590</span></div>
<div class="dc" style="left:2.8px;width:53.8px;top:218.9px;height:21.9px;line-height:21.9px"><span class="d">24/09/27</span></div>
<div class="c" style="left:56.6px;width:40.93px;padding-right:3.6px;top:218.9px;height:21.9px;line-height:21.9px"><span class="n">2<span class="cm">,</span>845</span></div>
<div class="c" style="left:97.53px;width:40.93px;padding-right:3.6px;top:218.9px;height:21.9px;line-height:21.9px"><span class="n">2<span class="cm">,</span>830</span></div>
<div class="c" style="left:138.46px;width:40.93px;padding-right:3.6px;top:218.9px;height:21.9px;line-height:21.9px"><span class="n">2<span class="cm">,</span>826</span></div>
<div class="c" style="left:179.39px;width:40.93px;padding-right:3.6px;top:218.9px;height:21.9px;line-height:21.9px"><span class="n">2<span class="cm">,</span>889</span></div>
<div class="c" style="left:220.32px;width:40.93px;padding-right:3.6px;top:218.9px;height:21.9px;line-height:21.9px"><span class="n">3<span class="cm">,</span>000</span></div>
<div class="c" style="left:261.25px;width:40.93px;padding-right:3.6px;top:218.9px;height:21.9px;line-height:21.9px"><span class="n">2<span class="cm">,</span>907</span></div>
<div class="c" style="left:302.18px;width:40.93px;padding-right:3.6px;top:218.9px;height:21.9px;line-height:21.9px"><span class="n">2<span class="cm">,</span>885</span></div>
<div class="c" style="left:343.11px;width:40.93px;padding-right:3.6px;top:218.9px;height:21.9px;line-height:21.9px"><span class="n">2<span class="cm">,</span>808</span></div>
<div class="c" style="left:384.04px;width:40.93px;padding-right:3.6px;top:218.9px;height:21.9px;line-height:21.9px"><span class="n">3<span class="cm">,</span>079</span></div>
<div class="c" style="left:424.97px;width:40.93px;padding-right:3.6px;top:218.9px;height:21.9px;line-height:21.9px"><span class="n">3<span class="cm">,</span>164</span></div>
<div class="c" style="left:465.9px;width:40.93px;padding-right:3.6px;top:218.9px;height:21.9px;line-height:21.9px"><span class="n">2<span class="cm">,</span>855</span></div>
<div class="c" style="left:506.83px;width:40.93px;padding-right:3.6px;top:218.9px;height:21.9px;line-height:21.9px"><span class="n">2<span class="cm">,</span>877</span></div>
<div class="c" style="left:547.76px;width:40.93px;padding-right:3.6px;top:218.9px;height:21.9px;line-height:21.9px"><span class="n">3<span class="cm">,</span>187</span></div>
<div class="c" style="left:588.69px;width:40.93px;padding-right:3.6px;top:218.9px;height:21.9px;line-height:21.9px"><span class="n">3<span class="cm">,</span>197</span></div>
<div class="c" style="left:629.62px;width:40.88px;padding-right:3.6px;top:218.9px;height:21.9px;line-height:21.9px"><span class="n">3<span class="cm">,</span>409</span></div>
<div class="c" style="left:670.5px;width:45.8px;padding-right:3.6px;top:218.9px;height:21.9px;line-height:21.9px"><span class="n">9<span class="cm">,</span>274</span></div>
<div class="c" style="left:716.3px;width:40.5px;padding-right:3.6px;top:218.9px;height:21.9px;line-height:21.9px"><span class="n">3<span class="cm">,</span>530</span></div>
<div class="c" style="left:756.8px;width:40.7px;padding-right:3.6px;top:218.9px;height:21.9px;line-height:21.9px"><span class="n">3<span class="cm">,</span>590</span></div>
</div>
<svg class="abs" style="left:0;top:246px;will-change:transform" width="449" height="267" viewBox="0 246 449 267">
<rect x="2.5" y="249.5" width="442" height="262" fill="#fff"/>
<path d="M3.5 491.94H405.4M3.5 467.4H405.4M3.5 442.86H405.4M3.5 418.33H405.4M3.5 393.79H405.4M3.5 369.26H405.4M3.5 344.72H405.4M3.5 320.19H405.4M3.5 295.65H405.4M3.5 271.12H405.4M11.6 250.5V497.5M51.65 250.5V497.5M98.37 250.5V497.5M118.4 250.5V497.5M158.45 250.5V497.5M198.5 250.5V497.5M238.55 250.5V497.5M258.57 250.5V497.5M298.62 250.5V497.5M358.7 250.5V497.5" stroke="#f0f0f0" stroke-width="1" fill="none"/>
<path d="M11.6 332.4 L18.27 352.5 L24.95 345.7 L31.62 341 L38.3 333 L44.98 334.5 L51.65 328.7 L58.33 347.3 L65 357 L71.67 357.5 L78.35 379.9 L85.02 371.2 L91.7 367.4 L98.37 384 L105.05 399.3 L111.72 465.5 L118.4 401.4 L125.07 404.5 L131.75 412.6 L138.43 398.2 L145.1 395.9 L151.77 410.3 L158.45 424.3 L165.12 405.4 L171.8 405.2 L178.47 396.6 L185.15 400 L191.82 414.3 L198.5 409.5 L205.17 423.8 L211.85 399.5 L218.52 409.4 L225.2 398.5 L231.88 391.4 L238.55 375 L245.22 378.7 L251.9 402 L258.57 414.3 L265.25 427.8 L271.93 419.7 L278.6 428.6 L285.28 458.2 L291.95 435.2 L298.62 456.1 L305.3 446.5 L311.98 449.2 L318.65 436.3 L325.32 440.4 L332 461.4 L338.68 464.3 L345.35 454.64 L352.03 462 L358.7 477.21 L365.2 455.62 L371.7 388.89 L378.6 402.63 L385.1 387.91 L390.9 395.27" stroke="#dc3030" stroke-width="0.95" fill="none" stroke-linejoin="round"/>
<path d="M11.6 319.1 L18.27 339.2 L24.95 334.4 L31.62 329.3 L38.3 320.7 L44.98 324.2 L51.65 316 L58.33 334.4 L65 340.6 L71.67 348 L78.35 372.5 L85.02 366 L91.7 359.2 L98.37 379.9 L105.05 396.3 L111.72 463.5 L118.4 392.8 L125.07 394.4 L131.75 401.4 L138.43 390.1 L145.1 391.4 L151.77 405 L158.45 418.7 L165.12 403.5 L171.8 396.5 L178.47 389.3 L185.15 389.5 L191.82 402.4 L198.5 393.4 L205.17 406.5 L211.85 371.9 L218.52 380.1 L225.2 368.9 L231.88 362.7 L238.55 345.3 L245.22 344.3 L251.9 369.9 L258.57 381.2 L265.25 402.6 L271.93 388.3 L278.6 410.2 L285.28 441 L291.95 420 L298.62 451.2 L305.3 434.8 L311.98 434.2 L318.65 416.4 L325.32 417.9 L332 432.2 L338.68 430.7 L345.35 423.73 L352.03 424.71 L358.7 446.3 L365.2 418.82 L371.7 360.43 L378.6 370.24 L385.1 362.39 L390.9 370.24" stroke="#f21cf2" stroke-width="0.95" fill="none" stroke-linejoin="round"/>
<path d="M11.6 282.3 L18.27 301.7 L24.95 300.7 L31.62 302.1 L38.3 292.9 L44.98 298.2 L51.65 285.3 L58.33 304.8 L65 306.8 L71.67 317.5 L78.35 346.4 L85.02 342.3 L91.7 337.9 L98.37 365.4 L105.05 380.9 L111.72 429.1 L118.4 372.7 L125.07 369 L131.75 370.7 L138.43 363.5 L145.1 370.3 L151.77 383.8 L158.45 396.4 L165.12 384.2 L171.8 377.5 L178.47 369.3 L185.15 370.6 L191.82 379.5 L198.5 367.5 L205.17 382 L211.85 333.8 L218.52 342.7 L225.2 333 L231.88 325.8 L238.55 310 L245.22 310.9 L251.9 343.2 L258.57 354.5 L265.25 374 L271.93 353.6 L278.6 365.7 L285.28 397.2 L291.95 384.6 L298.62 404.3 L305.3 379 L311.98 373.9 L318.65 358.46 L325.32 356.5 L332 370.73 L338.68 368.77 L345.35 369.26 L352.03 373.19 L358.7 402.63 L365.2 371.22 L371.7 319.7 L378.6 331.48 L385.1 326.08 L390.9 327.55" stroke="#24247a" stroke-width="0.95" fill="none" stroke-linejoin="round"/>
<path d="M2.5 497.5H444.5M405.4 249.5V497.5M405.4 491.94h3M405.4 479.67h1.6M405.4 467.4h3M405.4 455.13h1.6M405.4 442.86h3M405.4 430.6h1.6M405.4 418.33h3M405.4 406.06h1.6M405.4 393.79h3M405.4 381.53h1.6M405.4 369.26h3M405.4 356.99h1.6M405.4 344.72h3M405.4 332.46h1.6M405.4 320.19h3M405.4 307.92h1.6M405.4 295.65h3M405.4 283.39h1.6M405.4 271.12h3M11.6 497.5v4M51.65 497.5v4M98.37 497.5v4M118.4 497.5v4M158.45 497.5v4M198.5 497.5v4M238.55 497.5v4M258.57 497.5v4M298.62 497.5v4M358.7 497.5v4" stroke="#7d7d7d" stroke-width="1" fill="none"/>
<rect x="2.5" y="249.5" width="442" height="262" fill="none" stroke="#787c82" stroke-width="1.1"/>
<g font-family="'Liberation Sans','NanumGothic','Noto Sans CJK KR',sans-serif" font-size="11.5" fill="#111" stroke="#111" stroke-width="0.2">
<text x="414.6" y="496.33" textLength="22.6" lengthAdjust="spacingAndGlyphs">2,750</text>
<text x="414.6" y="471.8" textLength="22.6" lengthAdjust="spacingAndGlyphs">2,800</text>
<text x="414.6" y="447.26" textLength="22.6" lengthAdjust="spacingAndGlyphs">2,850</text>
<text x="414.6" y="422.73" textLength="22.6" lengthAdjust="spacingAndGlyphs">2,900</text>
<text x="414.6" y="398.19" textLength="22.6" lengthAdjust="spacingAndGlyphs">2,950</text>
<text x="414.6" y="373.66" textLength="22.6" lengthAdjust="spacingAndGlyphs">3,000</text>
<text x="414.6" y="349.12" textLength="22.6" lengthAdjust="spacingAndGlyphs">3,050</text>
<text x="414.6" y="324.59" textLength="22.6" lengthAdjust="spacingAndGlyphs">3,100</text>
<text x="414.6" y="300.05" textLength="22.6" lengthAdjust="spacingAndGlyphs">3,150</text>
<text x="414.6" y="275.52" textLength="22.6" lengthAdjust="spacingAndGlyphs">3,200</text>
<text x="13" y="508.8" textLength="9.2" lengthAdjust="spacingAndGlyphs">07</text>
<text x="53.05" y="508.8" textLength="24.2" lengthAdjust="spacingAndGlyphs">07/23</text>
<text x="99.77" y="508.8" textLength="9.2" lengthAdjust="spacingAndGlyphs">08</text>
<text x="119.8" y="508.8" textLength="24.2" lengthAdjust="spacingAndGlyphs">08/06</text>
<text x="159.85" y="508.8" textLength="24.2" lengthAdjust="spacingAndGlyphs">08/14</text>
<text x="199.9" y="508.8" textLength="24.2" lengthAdjust="spacingAndGlyphs">08/23</text>
<text x="239.95" y="508.8" textLength="9.2" lengthAdjust="spacingAndGlyphs">09</text>
<text x="259.97" y="508.8" textLength="24.2" lengthAdjust="spacingAndGlyphs">09/05</text>
<text x="300.02" y="508.8" textLength="24.2" lengthAdjust="spacingAndGlyphs">09/13</text>
<text x="360.1" y="508.8" textLength="9.2" lengthAdjust="spacingAndGlyphs">10</text>
<text x="402.2" y="508.8" textLength="23" lengthAdjust="spacingAndGlyphs">10/14</text>
</g>
<g font-family="'Liberation Sans','NanumGothic','Noto Sans CJK KR',sans-serif" font-size="10.2">
<text x="6.2" y="261.3" fill="#dc3030" stroke="#dc3030" stroke-width="0.25" textLength="30.8" lengthAdjust="spacingAndGlyphs">국고3Y</text>
<text x="41.1" y="261.3" fill="#f21cf2" stroke="#f21cf2" stroke-width="0.25" textLength="30.5" lengthAdjust="spacingAndGlyphs">국고5Y</text>
<text x="75.6" y="261.3" fill="#24247a" stroke="#24247a" stroke-width="0.25" textLength="35" lengthAdjust="spacingAndGlyphs">국고10Y</text>
</g>
</svg>
<div id="t2">
<svg class="abs" style="left:440px;top:246px" width="360" height="267" viewBox="440 246 360 267">
<rect x="450.2" y="249.5" width="360" height="262" fill="#fff"/>
<rect x="450.2" y="270.6" width="70.4" height="240.9" fill="#d6e3f1"/>
<rect x="450.2" y="249.5" width="360" height="21.1" fill="#2a6db6"/>
<path d="M520.6 249.5V270.6M590.4 249.5V270.6M660 249.5V270.6M729.5 249.5V270.6" stroke="#4a86c7" stroke-width="1" fill="none"/>
<path d="M520.6 270.6V511.5M590.4 270.6V511.5M660 270.6V511.5M729.5 270.6V511.5M520.6 292.2H800M520.6 313.8H800M520.6 335.5H800M520.6 357.3H800M520.6 379.1H800M520.6 401H800M520.6 422.9H800M520.6 444.6H800M520.6 466.4H800M520.6 488.2H800M520.6 509.4H800" stroke="#c8d6e5" stroke-width="1.1" fill="none"/>
<path d="M450.2 292.2H520.6M450.2 313.8H520.6M450.2 335.5H520.6M450.2 357.3H520.6M450.2 379.1H520.6M450.2 401H520.6M450.2 422.9H520.6M450.2 444.6H520.6M450.2 466.4H520.6M450.2 488.2H520.6M450.2 509.4H520.6" stroke="#b9c9db" stroke-width="1.1" fill="none"/>
<path d="M519 265.4v4h-4z" fill="#fff"/>
<rect x="798.4" y="270.6" width="2" height="240.9" fill="#eceef0"/>
<path d="M797.9 270.6V511.5" stroke="#c8d6e5" stroke-width="1.1" fill="none"/>
<path d="M450.2 511.5H800" stroke="#8c939a" stroke-width="1" fill="none"/>
</svg>
<div class="hd" style="left:450.2px;top:249.5px;width:70.4px;height:21.1px"><div class="t" style="top:5.2px;left:-10px"><span class="k">국고</span><span class="l" style="margin-right:-4.91px">10Y</span></div></div>
<div class="hd" style="left:520.6px;top:249.5px;width:69.8px;height:21.1px"><div class="t" style="top:5.2px"><span class="l" style="margin-right:-2.87px">11</span><span class="k">시</span><span class="l" style="margin-right:-3.07px">30</span><span class="k">분</span></div></div>
<div class="hd" style="left:590.4px;top:249.5px;width:69.6px;height:21.1px"><div class="t" style="top:5.2px"><span class="l" style="margin-right:-3.07px">16</span><span class="k">시</span><span class="l" style="margin-right:-3.07px">00</span><span class="k">분</span></div></div>
<div class="hd" style="left:660px;top:249.5px;width:69.5px;height:21.1px"><div class="t" style="top:5.2px"><span class="k">전기</span></div></div>
<div class="hd" style="left:729.5px;top:249.5px;width:71px;height:21.1px"><div class="t" style="top:5.2px"><span class="k">전기대비</span></div></div>
<div class="dc" style="left:450.2px;width:70.4px;top:271.3px;height:21.6px;line-height:21.6px"><span class="d">24/10/11</span></div>
<div class="c" style="left:520.6px;width:69.8px;padding-right:6.8px;top:271.3px;height:21.6px;line-height:21.6px"><span class="n">3<span class="cm">,</span>060</span></div>
<div class="c" style="left:590.4px;width:69.6px;padding-right:6.8px;top:271.3px;height:21.6px;line-height:21.6px"><span class="n">3<span class="cm">,</span>085</span></div>
<div class="c" style="left:660px;width:69.5px;padding-right:6.8px;top:271.3px;height:21.6px;line-height:21.6px"><span class="n">3<span class="cm">,</span>088</span></div>
<div class="c neg" style="left:729.5px;width:71px;padding-right:5.4px;top:271.3px;height:21.6px;line-height:21.6px"><span class="n"><span class="mi">-</span>0<span class="cm">,</span>003</span></div>
<div class="dc" style="left:450.2px;width:70.4px;top:292.9px;height:21.6px;line-height:21.6px"><span class="d">24/10/10</span></div>
<div class="c" style="left:520.6px;width:69.8px;padding-right:6.8px;top:292.9px;height:21.6px;line-height:21.6px"><span class="n">3<span class="cm">,</span>084</span></div>
<div class="c" style="left:590.4px;width:69.6px;padding-right:6.8px;top:292.9px;height:21.6px;line-height:21.6px"><span class="n">3<span class="cm">,</span>088</span></div>
<div class="c" style="left:660px;width:69.5px;padding-right:6.8px;top:292.9px;height:21.6px;line-height:21.6px"><span class="n">3<span class="cm">,</span>077</span></div>
<div class="c pos" style="left:729.5px;width:71px;padding-right:5.4px;top:292.9px;height:21.6px;line-height:21.6px"><span class="n">0<span class="cm">,</span>011</span></div>
<div class="dc" style="left:450.2px;width:70.4px;top:314.5px;height:21.7px;line-height:21.7px"><span class="d">24/10/08</span></div>
<div class="c" style="left:520.6px;width:69.8px;padding-right:6.8px;top:314.5px;height:21.7px;line-height:21.7px"><span class="n">3<span class="cm">,</span>126</span></div>
<div class="c" style="left:590.4px;width:69.6px;padding-right:6.8px;top:314.5px;height:21.7px;line-height:21.7px"><span class="n">3<span class="cm">,</span>077</span></div>
<div class="c" style="left:660px;width:69.5px;padding-right:6.8px;top:314.5px;height:21.7px;line-height:21.7px"><span class="n">3<span class="cm">,</span>101</span></div>
<div class="c neg" style="left:729.5px;width:71px;padding-right:5.4px;top:314.5px;height:21.7px;line-height:21.7px"><span class="n"><span class="mi">-</span>0<span class="cm">,</span>024</span></div>
<div class="dc" style="left:450.2px;width:70.4px;top:336.2px;height:21.8px;line-height:21.8px"><span class="d">24/10/07</span></div>
<div class="c" style="left:520.6px;width:69.8px;padding-right:6.8px;top:336.2px;height:21.8px;line-height:21.8px"><span class="n">3<span class="cm">,</span>085</span></div>
<div class="c" style="left:590.4px;width:69.6px;padding-right:6.8px;top:336.2px;height:21.8px;line-height:21.8px"><span class="n">3<span class="cm">,</span>101</span></div>
<div class="c" style="left:660px;width:69.5px;padding-right:6.8px;top:336.2px;height:21.8px;line-height:21.8px"><span class="n">2<span class="cm">,</span>996</span></div>
<div class="c pos" style="left:729.5px;width:71px;padding-right:5.4px;top:336.2px;height:21.8px;line-height:21.8px"><span class="n">0<span class="cm">,</span>105</span></div>
<div class="dc" style="left:450.2px;width:70.4px;top:358px;height:21.8px;line-height:21.8px"><span class="d">24/10/04</span></div>
<div class="c" style="left:520.6px;width:69.8px;padding-right:6.8px;top:358px;height:21.8px;line-height:21.8px"><span class="n">2<span class="cm">,</span>994</span></div>
<div class="c" style="left:590.4px;width:69.6px;padding-right:6.8px;top:358px;height:21.8px;line-height:21.8px"><span class="n">2<span class="cm">,</span>996</span></div>
<div class="c" style="left:660px;width:69.5px;padding-right:6.8px;top:358px;height:21.8px;line-height:21.8px"><span class="n">2<span class="cm">,</span>932</span></div>
<div class="c pos" style="left:729.5px;width:71px;padding-right:5.4px;top:358px;height:21.8px;line-height:21.8px"><span class="n">0<span class="cm">,</span>064</span></div>
<div class="dc" style="left:450.2px;width:70.4px;top:379.8px;height:21.9px;line-height:21.9px"><span class="d">24/10/02</span></div>
<div class="c" style="left:520.6px;width:69.8px;padding-right:6.8px;top:379.8px;height:21.9px;line-height:21.9px"><span class="n">2<span class="cm">,</span>942</span></div>
<div class="c" style="left:590.4px;width:69.6px;padding-right:6.8px;top:379.8px;height:21.9px;line-height:21.9px"><span class="n">2<span class="cm">,</span>932</span></div>
<div class="c" style="left:660px;width:69.5px;padding-right:6.8px;top:379.8px;height:21.9px;line-height:21.9px"><span class="n">2<span class="cm">,</span>992</span></div>
<div class="c neg" style="left:729.5px;width:71px;padding-right:5.4px;top:379.8px;height:21.9px;line-height:21.9px"><span class="n"><span class="mi">-</span>0<span class="cm">,</span>060</span></div>
<div class="dc" style="left:450.2px;width:70.4px;top:401.7px;height:21.9px;line-height:21.9px"><span class="d">24/09/30</span></div>
<div class="c" style="left:520.6px;width:69.8px;padding-right:6.8px;top:401.7px;height:21.9px;line-height:21.9px"><span class="n">2<span class="cm">,</span>988</span></div>
<div class="c" style="left:590.4px;width:69.6px;padding-right:6.8px;top:401.7px;height:21.9px;line-height:21.9px"><span class="n">2<span class="cm">,</span>992</span></div>
<div class="c" style="left:660px;width:69.5px;padding-right:6.8px;top:401.7px;height:21.9px;line-height:21.9px"><span class="n">3<span class="cm">,</span>000</span></div>
<div class="c neg" style="left:729.5px;width:71px;padding-right:5.4px;top:401.7px;height:21.9px;line-height:21.9px"><span class="n"><span class="mi">-</span>0<span class="cm">,</span>008</span></div>
<div class="dc" style="left:450.2px;width:70.4px;top:423.6px;height:21.7px;line-height:21.7px"><span class="d">24/09/27</span></div>
<div class="c" style="left:520.6px;width:69.8px;padding-right:6.8px;top:423.6px;height:21.7px;line-height:21.7px"><span class="n">3<span class="cm">,</span>000</span></div>
<div class="c" style="left:590.4px;width:69.6px;padding-right:6.8px;top:423.6px;height:21.7px;line-height:21.7px"><span class="n">3<span class="cm">,</span>000</span></div>
<div class="c" style="left:660px;width:69.5px;padding-right:6.8px;top:423.6px;height:21.7px;line-height:21.7px"><span class="n">3<span class="cm">,</span>001</span></div>
<div class="c neg" style="left:729.5px;width:71px;padding-right:5.4px;top:423.6px;height:21.7px;line-height:21.7px"><span class="n"><span class="mi">-</span>0<span class="cm">,</span>001</span></div>
<div class="dc" style="left:450.2px;width:70.4px;top:445.3px;height:21.8px;line-height:21.8px"><span class="d">24/09/26</span></div>
<div class="c" style="left:520.6px;width:69.8px;padding-right:6.8px;top:445.3px;height:21.8px;line-height:21.8px"><span class="n">3<span class="cm">,</span>005</span></div>
<div class="c" style="left:590.4px;width:69.6px;padding-right:6.8px;top:445.3px;height:21.8px;line-height:21.8px"><span class="n">3<span class="cm">,</span>001</span></div>
<div class="c" style="left:660px;width:69.5px;padding-right:6.8px;top:445.3px;height:21.8px;line-height:21.8px"><span class="n">2<span class="cm">,</span>997</span></div>
<div class="c pos" style="left:729.5px;width:71px;padding-right:5.4px;top:445.3px;height:21.8px;line-height:21.8px"><span class="n">0<span class="cm">,</span>004</span></div>
<div class="dc" style="left:450.2px;width:70.4px;top:467.1px;height:21.8px;line-height:21.8px"><span class="d">24/09/25</span></div>
<div class="c" style="left:520.6px;width:69.8px;padding-right:6.8px;top:467.1px;height:21.8px;line-height:21.8px"><span class="n">3<span class="cm">,</span>019</span></div>
<div class="c" style="left:590.4px;width:69.6px;padding-right:6.8px;top:467.1px;height:21.8px;line-height:21.8px"><span class="n">2<span class="cm">,</span>997</span></div>
<div class="c" style="left:660px;width:69.5px;padding-right:6.8px;top:467.1px;height:21.8px;line-height:21.8px"><span class="n">3<span class="cm">,</span>026</span></div>
<div class="c neg" style="left:729.5px;width:71px;padding-right:5.4px;top:467.1px;height:21.8px;line-height:21.8px"><span class="n"><span class="mi">-</span>0<span class="cm">,</span>029</span></div>
<div class="dc" style="left:450.2px;width:70.4px;top:488.9px;height:21.2px;line-height:21.2px"><span class="d">24/09/24</span></div>
<div class="c" style="left:520.6px;width:69.8px;padding-right:6.8px;top:488.9px;height:21.2px;line-height:21.2px"><span class="n">3<span class="cm">,</span>002</span></div>
<div class="c" style="left:590.4px;width:69.6px;padding-right:6.8px;top:488.9px;height:21.2px;line-height:21.2px"><span class="n">3<span class="cm">,</span>026</span></div>
<div class="c" style="left:660px;width:69.5px;padding-right:6.8px;top:488.9px;height:21.2px;line-height:21.2px"><span class="n">3<span class="cm">,</span>022</span></div>
<div class="c pos" style="left:729.5px;width:71px;padding-right:5.4px;top:488.9px;height:21.2px;line-height:21.2px"><span class="n">0<span class="cm">,</span>004</span></div>
</div>
</body></html>
